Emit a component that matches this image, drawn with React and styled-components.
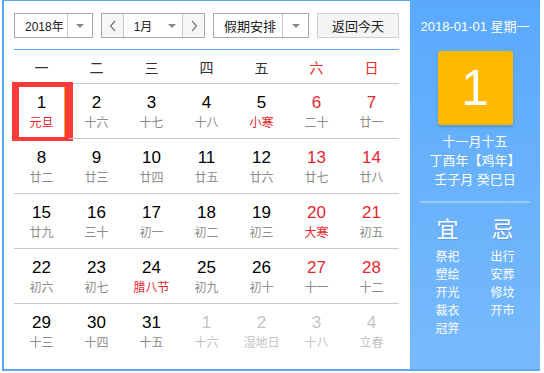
import React from 'react';
import styled, { createGlobalStyle, css } from 'styled-components';

const GlobalStyle = createGlobalStyle`
  body {
    margin: 0;
    background: #fff;
    font-family: "Liberation Sans", "Noto Sans CJK SC", sans-serif;
  }
`;

const Frame = styled.div`
  display: flex;
  width: 536px;
  height: 368px;
  margin-left: 2px;
  border-left: 2px solid #5aa7fb;
  border-top: 1px solid #5aa7fb;
  border-bottom: 2px solid #5aa7fb;
`;

const Main = styled.div`
  width: 385px;
  padding: 12px 11px 0 10px;
  background: #fff;
`;

const Toolbar = styled.div`
  display: flex;
  gap: 8px;
  height: 25px;
`;

const Box = styled.div`
  display: flex;
  box-sizing: border-box;
  height: 25px;
  border: 1px solid #a9a9a9;
  background: #fff;
  color: #222;
`;

const SelectText = styled.div`
  flex: 1;
  display: flex;
  align-items: center;
  justify-content: ${p => (p.$center ? 'center' : 'flex-start')};
  padding-left: ${p => (p.$center ? '0' : '10px')};
  font-size: ${p => p.$size || 12}px;
`;

const ArrowPart = styled.div`
  width: ${p => p.$w || 24}px;
  display: flex;
  align-items: center;
  justify-content: center;
  border-left: ${p => (p.$line ? '1px solid #c8c8c8' : 'none')};
`;

const Caret = styled.span`
  width: 0;
  height: 0;
  border-left: 4px solid transparent;
  border-right: 4px solid transparent;
  border-top: 4px solid #8a8a8a;
`;

const NavBtn = styled.div`
  width: 21px;
  display: flex;
  align-items: center;
  justify-content: center;
  background: #f6f6f6;
  ${p => p.$left && css`border-right: 1px solid #c8c8c8;`}
  ${p => p.$right && css`border-left: 1px solid #c8c8c8;`}
`;

const TodayBtn = styled.div`
  box-sizing: border-box;
  width: 82px;
  height: 25px;
  display: flex;
  align-items: center;
  justify-content: center;
  border: 1px solid #cfcfcf;
  background: #f5f5f5;
  font-size: 13px;
  color: #222;
`;

const BlueRule = styled.div`
  margin-top: 11px;
  height: 1px;
  background: #5aa7fb;
`;

const Grid = styled.div`
  display: grid;
  grid-template-columns: repeat(7, 55px);
`;

const HeadCell = styled.div`
  height: 33px;
  display: flex;
  align-items: center;
  justify-content: center;
  border-bottom: 1px solid #c8c8c8;
  font-size: 14px;
  color: ${p => (p.$red ? '#e52c2c' : '#333')};
`;

const DayCell = styled.div`
  position: relative;
  height: 54px;
  box-sizing: border-box;
  padding-top: 9px;
  text-align: center;
  border-bottom: ${p => (p.$last ? 'none' : '1px solid #c8c8c8')};
  height: ${p => (p.$last ? 54 : 55)}px;

  ${p => p.$selected && css`
    &::after {
      content: "";
      position: absolute;
      left: -2px;
      top: -2px;
      width: 61px;
      height: 59px;
      box-sizing: border-box;
      border-style: solid;
      border-color: #fb3b3b;
      border-width: 5px 8px 4px 7px;
      box-shadow: inset -1px 0 0 #f5b01a;
    }
  `}
`;

const DayNum = styled.div`
  font-size: 17px;
  line-height: 20px;
  color: ${p => (p.$muted ? '#c4c4c4' : p.$red ? '#e5272f' : '#000')};
`;

const Lunar = styled.div`
  font-size: 12px;
  line-height: 20px;
  color: ${p => (p.$muted ? '#c4c4c4' : p.$red ? '#e5272f' : '#8c8c8c')};
`;

const Panel = styled.div`
  width: 130px;
  display: flex;
  flex-direction: column;
  align-items: center;
  padding-top: 17px;
  background: linear-gradient(180deg, #5aa9fd 0%, #78bafc 100%);
  color: #fff;
`;

const PanelDate = styled.div`
  font-size: 13px;
  line-height: 18px;
`;

const BigDay = styled.div`
  margin-top: 15px;
  width: 75px;
  height: 74px;
  border-radius: 3px;
  background: #ffba00;
  box-shadow: 0 2px 3px rgba(40, 90, 160, 0.35);
  display: flex;
  align-items: center;
  justify-content: center;
  font-size: 50px;
  color: #fff;
`;

const InfoLines = styled.div`
  margin-top: 7px;
  text-align: center;
`;

const InfoLine = styled.div`
  font-size: 13px;
  line-height: 19px;
`;

const PanelRule = styled.div`
  margin-top: 12px;
  width: 110px;
  height: 2px;
  background: rgba(255, 255, 255, 0.3);
`;

const YiJi = styled.div`
  display: flex;
  gap: 15px;
  margin-top: 14px;
`;

const YiJiCol = styled.div`
  width: 40px;
  display: flex;
  flex-direction: column;
  align-items: center;
`;

const YiJiHead = styled.div`
  font-size: 22px;
  line-height: 26px;
  margin-bottom: 5px;
  text-shadow: 1px 1px 1px rgba(60, 110, 180, 0.4);
`;

const YiJiItem = styled.div`
  width: 24px;
  font-size: 12px;
  line-height: 18px;
`;

const Chevron = ({ dir }) => (
  <svg width="8" height="12" viewBox="0 0 8 12">
    <polyline
      points={dir === 'left' ? '6,1 1.5,6 6,11' : '2,1 6.5,6 2,11'}
      fill="none"
      stroke="#777"
      strokeWidth="1.2"
    />
  </svg>
);

const weekdays = ['一', '二', '三', '四', '五', '六', '日'];

const days = [
  [1, '元旦', 'h'], [2, '十六'], [3, '十七'], [4, '十八'], [5, '小寒', 'h'], [6, '二十'], [7, '廿一'],
  [8, '廿二'], [9, '廿三'], [10, '廿四'], [11, '廿五'], [12, '廿六'], [13, '廿七'], [14, '廿八'],
  [15, '廿九'], [16, '三十'], [17, '初一'], [18, '初二'], [19, '初三'], [20, '大寒', 'h'], [21, '初五'],
  [22, '初六'], [23, '初七'], [24, '腊八节', 'h'], [25, '初九'], [26, '初十'], [27, '十一'], [28, '十二'],
  [29, '十三'], [30, '十四'], [31, '十五'], [1, '十六', 'm'], [2, '湿地日', 'm'], [3, '十八', 'm'], [4, '立春', 'm'],
];

const yi = ['祭祀', '塑绘', '开光', '裁衣', '冠笄'];
const ji = ['出行', '安葬', '修坟', '开市'];

const App = () => {
  return (
    <>
      <GlobalStyle />
      <Frame>
        <Main>
          <Toolbar>
            <Box style={{ width: 79 }}>
              <SelectText>2018年</SelectText>
              <ArrowPart $line><Caret /></ArrowPart>
            </Box>
            <Box style={{ width: 104 }}>
              <NavBtn $left><Chevron dir="left" /></NavBtn>
              <SelectText $center>1月</SelectText>
              <ArrowPart $w={20}><Caret /></ArrowPart>
              <NavBtn $right><Chevron dir="right" /></NavBtn>
            </Box>
            <Box style={{ width: 96 }}>
              <SelectText $size={13}>假期安排</SelectText>
              <ArrowPart $line $w={25}><Caret /></ArrowPart>
            </Box>
            <TodayBtn>返回今天</TodayBtn>
          </Toolbar>
          <BlueRule />
          <Grid>
            {weekdays.map((w, i) => (
              <HeadCell key={w} $red={i > 4}>{w}</HeadCell>
            ))}
            {days.map(([n, l, t], i) => {
              const col = i % 7;
              const muted = t === 'm';
              return (
                <DayCell key={i} $last={i >= 28} $selected={i === 0}>
                  <DayNum $muted={muted} $red={col > 4}>{n}</DayNum>
                  <Lunar $muted={muted} $red={t === 'h'}>{l}</Lunar>
                </DayCell>
              );
            })}
          </Grid>
        </Main>
        <Panel>
          <PanelDate>2018-01-01 星期一</PanelDate>
          <BigDay>1</BigDay>
          <InfoLines>
            <InfoLine>十一月十五</InfoLine>
            <InfoLine>丁酉年【鸡年】</InfoLine>
            <InfoLine>壬子月 癸巳日</InfoLine>
          </InfoLines>
          <PanelRule />
          <YiJi>
            <YiJiCol>
              <YiJiHead>宜</YiJiHead>
              {yi.map(x => <YiJiItem key={x}>{x}</YiJiItem>)}
            </YiJiCol>
            <YiJiCol>
              <YiJiHead>忌</YiJiHead>
              {ji.map(x => <YiJiItem key={x}>{x}</YiJiItem>)}
            </YiJiCol>
          </YiJi>
        </Panel>
      </Frame>
    </>
  );
};

export default App;
